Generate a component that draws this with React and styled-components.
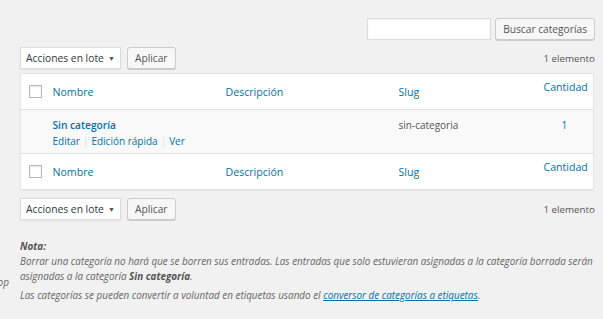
import React from 'react';
import styled, { createGlobalStyle } from 'styled-components';

const GlobalStyle = createGlobalStyle`
  html, body {
    margin: 0;
    padding: 0;
    background: #f1f1f1;
  }
  body {
    font-family: "Open Sans", "Noto Sans", sans-serif;
    font-size: 10px;
    color: #444;
  }
`;

const Page = styled.div`
  width: 603px;
  height: 319px;
  overflow: hidden;
  display: flex;
`;

const SideEdge = styled.div`
  width: 20px;
  flex: none;
  overflow: hidden;
  display: flex;
  flex-direction: column;
  align-items: flex-end;
  padding-top: 275px;
`;

const EdgeText = styled.span`
  font-style: italic;
  font-size: 10px;
  line-height: 15px;
  color: #666;
  white-space: nowrap;
  margin-right: 11px;
`;

const Main = styled.div`
  flex: 1;
  padding: 18px 8px 0 0;
  min-width: 0;
`;

const SearchBox = styled.div`
  display: flex;
  justify-content: flex-end;
  gap: 4px;
  height: 22px;
`;

const SearchInput = styled.input`
  width: 124px;
  height: 22px;
  box-sizing: border-box;
  border: 1px solid #ddd;
  background: #fff;
  box-shadow: inset 0 1px 2px rgba(0, 0, 0, 0.07);
  margin: 0;
  padding: 0 4px;
`;

const Button = styled.button`
  height: 22px;
  box-sizing: border-box;
  padding: 0 7px;
  margin: 0;
  font-family: inherit;
  font-size: 10.2px;
  color: #555;
  background: #f7f7f7;
  border: 1px solid #ccc;
  border-radius: 3px;
  box-shadow: 0 1px 0 #ccc;
  white-space: nowrap;
  line-height: 20px;
`;

const TableNav = styled.div`
  display: flex;
  align-items: center;
  justify-content: space-between;
  height: 22px;
  margin: ${p => p.$top ? '7px 0 4px' : '8px 0 0'};
`;

const Actions = styled.div`
  display: flex;
  gap: 6px;
`;

const Select = styled.div`
  width: 101px;
  height: 22px;
  box-sizing: border-box;
  background: #fff;
  border: 1px solid #ddd;
  box-shadow: 0 1px 2px rgba(0, 0, 0, 0.07);
  display: flex;
  align-items: center;
  justify-content: space-between;
  padding: 0 5px;
  font-size: 10.3px;
  color: #32373c;
  white-space: nowrap;
`;

const Arrow = styled.span`
  font-size: 7px;
  color: #555;
`;

const Count = styled.span`
  font-size: 9.8px;
  color: #555;
`;

const Table = styled.table`
  width: 574px;
  border-collapse: collapse;
  border-spacing: 0;
  background: #fff;
  border: 1px solid #e5e5e5;
  box-shadow: 0 1px 1px rgba(0, 0, 0, 0.04);
  table-layout: fixed;
`;

const HeadCell = styled.th`
  width: ${p => p.$w ? `${p.$w}px` : 'auto'};
  text-align: ${p => p.$center ? 'center' : 'left'};
  vertical-align: ${p => p.$top ? 'top' : 'middle'};
  font-weight: 400;
  height: 36px;
  box-sizing: border-box;
  padding: ${p => p.$top ? '6px 8px 0' : '0 8px'};
  color: #0073aa;
  font-size: 10.6px;
  line-height: 14px;
  border-${p => p.$foot ? 'top' : 'bottom'}: 1px solid #e1e1e1;
`;

const CheckCell = styled.td`
  width: 24px;
  box-sizing: border-box;
  padding: 0 0 0 8px;
  vertical-align: middle;
  border-${p => p.$foot ? 'top' : 'bottom'}: 1px solid #e1e1e1;
`;

const Check = styled.span`
  display: block;
  width: 11px;
  height: 11px;
  border: 1px solid #b4b9be;
  box-shadow: inset 0 1px 2px rgba(0, 0, 0, 0.1);
  background: #fff;
`;

const Row = styled.tr`
  background: #f9f9f9;
`;

const Cell = styled.td`
  vertical-align: top;
  padding: 8px 8px 0;
  height: 44px;
  box-sizing: border-box;
  color: ${p => p.$link ? '#0073aa' : '#555'};
  text-align: ${p => p.$center ? 'center' : 'left'};
  font-size: 10px;
  line-height: 15px;
`;

const RowTitle = styled.a`
  display: block;
  font-weight: 600;
  color: #0073aa;
  font-size: 10.2px;
  line-height: 15px;
`;

const RowActions = styled.div`
  display: flex;
  align-items: center;
  margin-top: 1px;
  font-size: 10px;
  line-height: 15px;
  color: #0073aa;
  white-space: nowrap;
`;

const Sep = styled.span`
  color: #ddd;
  margin: 0 3px;
`;

const Notes = styled.div`
  margin-top: 19px;
  color: #666;
  font-style: italic;
  font-size: 9.9px;
  line-height: 15px;
`;

const Para = styled.p`
  margin: 0 0 4px;
`;

const Strong = styled.strong`
  font-weight: 700;
  color: #555;
`;

const NoteLink = styled.a`
  color: #0073aa;
  text-decoration: underline;
`;

const HeaderRow = ({ foot }) => (
  <tr>
    <CheckCell $foot={foot}><Check /></CheckCell>
    <HeadCell $foot={foot} $w={173}>Nombre</HeadCell>
    <HeadCell $foot={foot} $w={173}>Descripción</HeadCell>
    <HeadCell $foot={foot} $w={145}>Slug</HeadCell>
    <HeadCell $foot={foot} $center $top>Cantidad</HeadCell>
  </tr>
);

const Nav = ({ top }) => (
  <TableNav $top={top}>
    <Actions>
      <Select>Acciones en lote <Arrow>▼</Arrow></Select>
      <Button>Aplicar</Button>
    </Actions>
    <Count>1 elemento</Count>
  </TableNav>
);

export default function App() {
  return (
    <>
      <GlobalStyle />
      <Page>
        <SideEdge>
          <EdgeText>Desktop</EdgeText>
        </SideEdge>
        <Main>
          <SearchBox>
            <SearchInput />
            <Button>Buscar categorías</Button>
          </SearchBox>
          <Nav top />
          <Table>
            <thead>
              <HeaderRow />
            </thead>
            <tbody>
              <Row>
                <td />
                <Cell>
                  <RowTitle>Sin categoría</RowTitle>
                  <RowActions>
                    Editar<Sep>|</Sep>Edición rápida<Sep>|</Sep>Ver
                  </RowActions>
                </Cell>
                <Cell />
                <Cell>sin-categoria</Cell>
                <Cell $link $center>1</Cell>
              </Row>
            </tbody>
            <tfoot>
              <HeaderRow foot />
            </tfoot>
          </Table>
          <Nav />
          <Notes>
            <Para>
              <Strong>Nota:</Strong><br />
              Borrar una categoría no hará que se borren sus entradas. Las entradas que solo estuvieran asignadas a la categoría borrada serán asignadas a la categoría <Strong>Sin categoría</Strong>.
            </Para>
            <Para>
              Las categorías se pueden convertir a voluntad en etiquetas usando el <NoteLink>conversor de categorías a etiquetas</NoteLink>.
            </Para>
          </Notes>
        </Main>
      </Page>
    </>
  );
}
